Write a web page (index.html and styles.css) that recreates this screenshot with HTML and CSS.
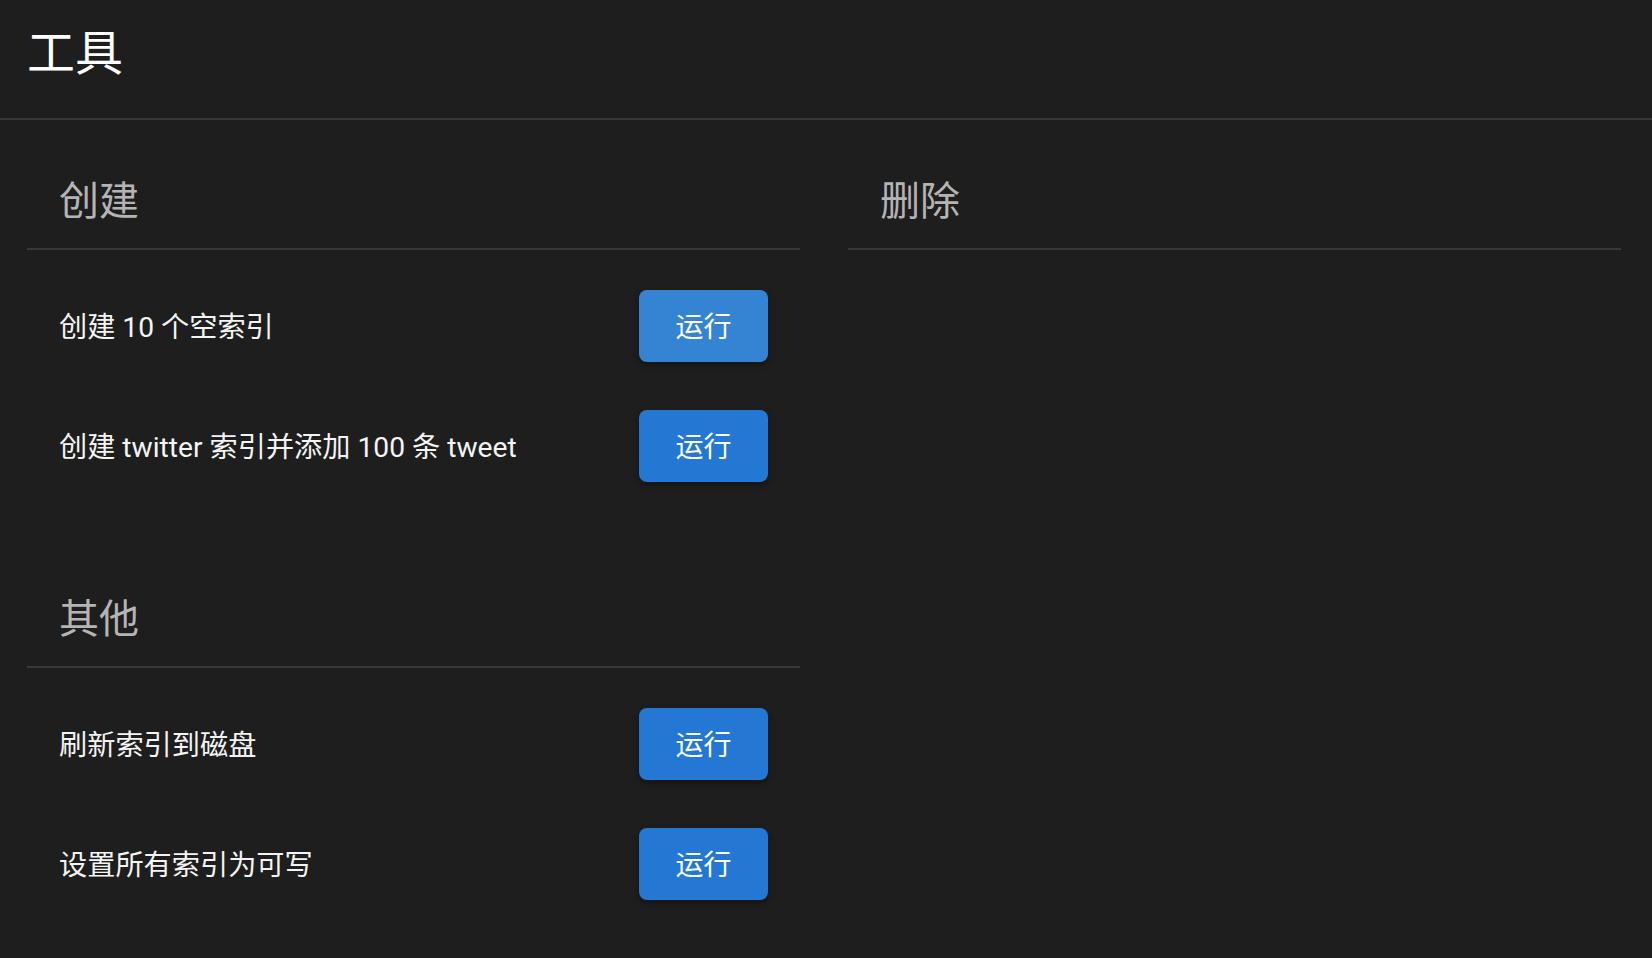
FILE: index.html
```html
<!DOCTYPE html>
<html lang="zh-CN">
<head>
<meta charset="utf-8">
<title>工具</title>
<link rel="stylesheet" href="styles.css">
</head>
<body>
<header class="topbar">
  <h1 class="title">工具</h1>
</header>
<main class="columns">
  <div class="column">
    <section class="section">
      <h2 class="section-head">创建</h2>
      <ul class="rows">
        <li class="row"><span class="row-label">创建 10 个空索引</span><button class="run run-hover">运行</button></li>
        <li class="row"><span class="row-label">创建 twitter 索引并添加 100 条 tweet</span><button class="run">运行</button></li>
      </ul>
    </section>
    <section class="section section-next">
      <h2 class="section-head">其他</h2>
      <ul class="rows">
        <li class="row"><span class="row-label">刷新索引到磁盘</span><button class="run">运行</button></li>
        <li class="row"><span class="row-label">设置所有索引为可写</span><button class="run">运行</button></li>
      </ul>
    </section>
  </div>
  <div class="column">
    <section class="section">
      <h2 class="section-head">删除</h2>
    </section>
  </div>
</main>
</body>
</html>
```

FILE: styles.css
```css
* { box-sizing: border-box; }
html, body {
  margin: 0;
  padding: 0;
  background: #1e1e1e;
  color: #f2f2f2;
  font-family: Roboto, "Noto Sans CJK SC", sans-serif;
}
body { min-height: 958px; }

.topbar {
  height: 120px;
  padding: 26px 27px 0;
  border-bottom: 2px solid #383838;
}
.title {
  margin: 0;
  font-size: 48px;
  line-height: 56px;
  font-weight: 400;
  color: #ffffff;
}

.columns {
  display: grid;
  grid-template-columns: 773px 773px;
  column-gap: 48px;
  padding: 58px 31px 0 27px;
}

.section-head {
  margin: 0;
  padding: 0 32px 22px;
  font-size: 40px;
  line-height: 48px;
  font-weight: 400;
  color: #b4b4b4;
  border-bottom: 2px solid #383838;
}

.section-next { margin-top: 90px; }

.rows {
  list-style: none;
  margin: 0;
  padding: 16px 0 0;
}
.row {
  height: 120px;
  padding: 0 32px;
  display: flex;
  align-items: center;
  justify-content: space-between;
}
.row-label {
  font-size: 28.2px;
  color: #f4f4f4;
  margin-bottom: 4px;
}

.run {
  width: 129px;
  height: 72px;
  border: none;
  border-radius: 8px;
  background: #2278d2;
  color: #ffffff;
  font-family: Roboto, "Noto Sans CJK SC", sans-serif;
  font-size: 28px;
  padding: 0 0 3px;
  box-shadow: 0 3px 6px rgba(0, 0, 0, 0.4);
  cursor: pointer;
}
.run-hover { background: #3584d4; }
```
